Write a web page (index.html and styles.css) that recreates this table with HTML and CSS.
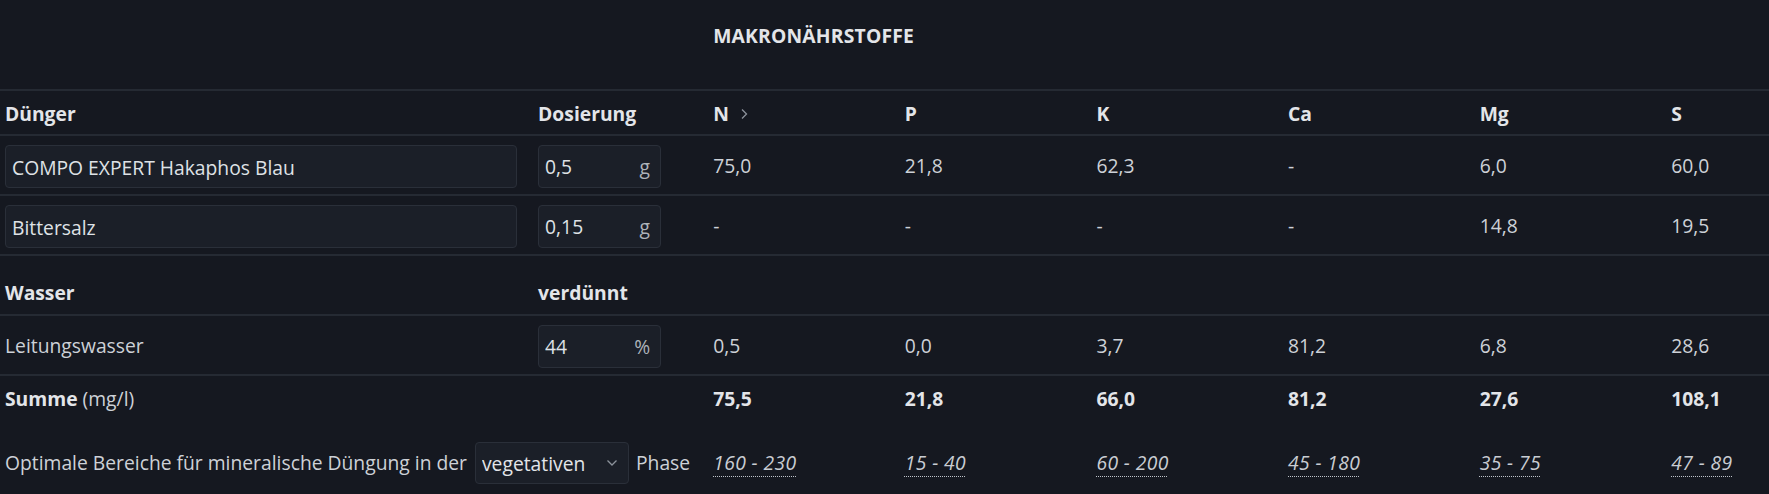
FILE: index.html
```html
<!DOCTYPE html>
<html lang="de">
<head>
<meta charset="utf-8">
<title>Makronährstoffe</title>
<link rel="stylesheet" href="styles.css">
</head>
<body>
<div class="page">
  <table class="nutri">
    <colgroup>
      <col class="c-name"><col class="c-dose">
      <col class="c-val"><col class="c-val"><col class="c-val"><col class="c-val"><col class="c-val"><col class="c-val">
    </colgroup>
    <thead>
      <tr class="group-row">
        <th colspan="2"></th>
        <th colspan="6" class="group">MAKRONÄHRSTOFFE</th>
      </tr>
      <tr class="head-row">
        <th>Dünger</th>
        <th>Dosierung</th>
        <th><span class="sortable">N <svg class="chev-r" width="8" height="12" viewBox="0 0 8 12"><path d="M2 1.5 L6.5 6 L2 10.5" fill="none" stroke="currentColor" stroke-width="1.3"/></svg></span></th>
        <th>P</th><th>K</th><th>Ca</th><th>Mg</th><th>S</th>
      </tr>
    </thead>
    <tbody>
      <tr class="row">
        <td><input class="field name-field" type="text" value="COMPO EXPERT Hakaphos Blau"></td>
        <td><div class="field dose-field"><input class="dose-input" type="text" value="0,5"><span class="unit">g</span></div></td>
        <td>75,0</td><td>21,8</td><td>62,3</td><td>-</td><td>6,0</td><td>60,0</td>
      </tr>
      <tr class="row">
        <td><input class="field name-field" type="text" value="Bittersalz"></td>
        <td><div class="field dose-field"><input class="dose-input" type="text" value="0,15"><span class="unit">g</span></div></td>
        <td>-</td><td>-</td><td>-</td><td>-</td><td>14,8</td><td>19,5</td>
      </tr>
      <tr class="section-row">
        <th>Wasser</th>
        <th>verdünnt</th>
        <td colspan="6"></td>
      </tr>
      <tr class="row">
        <td class="plain">Leitungswasser</td>
        <td><div class="field dose-field"><input class="dose-input" type="text" value="44"><span class="unit">%</span></div></td>
        <td>0,5</td><td>0,0</td><td>3,7</td><td>81,2</td><td>6,8</td><td>28,6</td>
      </tr>
    </tbody>
    <tfoot>
      <tr class="sum-row">
        <td colspan="2"><b>Summe</b> (mg/l)</td>
        <td>75,5</td><td>21,8</td><td>66,0</td><td>81,2</td><td>27,6</td><td>108,1</td>
      </tr>
      <tr class="range-row">
        <td colspan="2">
          <div class="phase-line">
            <span>Optimale Bereiche für mineralische Düngung in der</span>
            <div class="select-wrap">
              <select class="phase-select">
                <option selected>vegetativen</option>
                <option>generativen</option>
              </select>
              <svg class="chev-d" width="12" height="8" viewBox="0 0 12 8"><path d="M1.5 1.5 L6 6 L10.5 1.5" fill="none" stroke="currentColor" stroke-width="1.3"/></svg>
            </div>
            <span>Phase</span>
          </div>
        </td>
        <td><abbr class="range" title="mg/l">160 - 230</abbr></td>
        <td><abbr class="range" title="mg/l">15 - 40</abbr></td>
        <td><abbr class="range" title="mg/l">60 - 200</abbr></td>
        <td><abbr class="range" title="mg/l">45 - 180</abbr></td>
        <td><abbr class="range" title="mg/l">35 - 75</abbr></td>
        <td><abbr class="range" title="mg/l">47 - 89</abbr></td>
      </tr>
    </tfoot>
  </table>
</div>
</body>
</html>
```
FILE: styles.css
```css
html, body {
  margin: 0;
  padding: 0;
  background: #151820;
  overflow: hidden;
}

body {
  font-family: "Open Sans", "Noto Sans", sans-serif;
  font-size: 19.3px;
  line-height: 28px;
  color: #cdd1d7;
}

.page {
  width: 1769px;
  overflow: hidden;
}

.nutri {
  table-layout: fixed;
  width: 1858px;
  border-collapse: collapse;
}

.c-name { width: 533px; }
.c-dose { width: 175px; }
.c-val { width: 191.6px; }

.nutri th,
.nutri td {
  padding: 0 5px;
  text-align: left;
  vertical-align: middle;
  white-space: nowrap;
}

.nutri th {
  font-weight: 700;
  color: #e3e5e9;
}

.group-row th {
  height: 90px;
  vertical-align: top;
  padding-top: 22px;
  box-sizing: border-box;
  border-bottom: 2px solid #252a33;
}

.group {
  font-weight: 700;
  color: #d3d7dd;
  letter-spacing: 0.2px;
}

.head-row th {
  height: 41px;
  padding-top: 2px;
  border-bottom: 2px solid #252a33;
}

.sortable {
  display: inline-flex;
  align-items: center;
  gap: 11px;
}

.chev-r {
  color: #8c929b;
}

.row td {
  height: 56px;
  padding-top: 2px;
  border-bottom: 2px solid #252a33;
}

.field {
  box-sizing: border-box;
  height: 43px;
  background: #1b1f28;
  border: 1px solid #2a2f39;
  border-radius: 4px;
  color: #dfe2e6;
  font: inherit;
}

.name-field {
  display: block;
  width: 512px;
  padding: 2px 6px 0;
  outline: none;
}

.dose-field {
  display: flex;
  align-items: center;
  width: 123px;
  padding: 2px 10px 0 6px;
}

.dose-input {
  flex: 1;
  min-width: 0;
  background: transparent;
  border: 0;
  padding: 0;
  font: inherit;
  color: #dfe2e6;
  outline: none;
}

.unit {
  color: #aeb3ba;
}

.section-row th,
.section-row td {
  height: 58px;
  box-sizing: border-box;
  padding-top: 23px;
  padding-bottom: 7px;
  border-bottom: 2px solid #252a33;
}

.sum-row td {
  height: 45px;
  font-weight: 700;
  color: #e3e5e9;
}

.sum-row td:first-child {
  font-weight: 400;
  color: #cdd1d7;
}

.sum-row b {
  font-weight: 700;
  color: #e3e5e9;
}

.range-row td {
  height: 74px;
  vertical-align: top;
  padding-top: 21px;
  box-sizing: border-box;
}

.range-row td:not(:first-child) {
  padding-top: 28px;
}

.phase-line {
  display: flex;
  align-items: center;
  gap: 6px;
}

.select-wrap {
  position: relative;
  margin-left: 2px;
  margin-right: 1px;
}

.phase-select {
  appearance: none;
  -webkit-appearance: none;
  box-sizing: border-box;
  width: 154px;
  height: 42px;
  padding: 2px 30px 0 6px;
  background: #1b1f28;
  border: 1px solid #2a2f39;
  border-radius: 4px;
  color: #e3e5e9;
  font: inherit;
  outline: none;
}

.chev-d {
  position: absolute;
  right: 11px;
  top: 17px;
  color: #8c929b;
  pointer-events: none;
}

.range {
  font-style: italic;
  color: #c9cdd3;
  letter-spacing: 0.4px;
  text-decoration: underline dotted #bfc4cb;
  text-underline-offset: 6px;
  text-decoration-thickness: 1px;
  cursor: help;
}
```
